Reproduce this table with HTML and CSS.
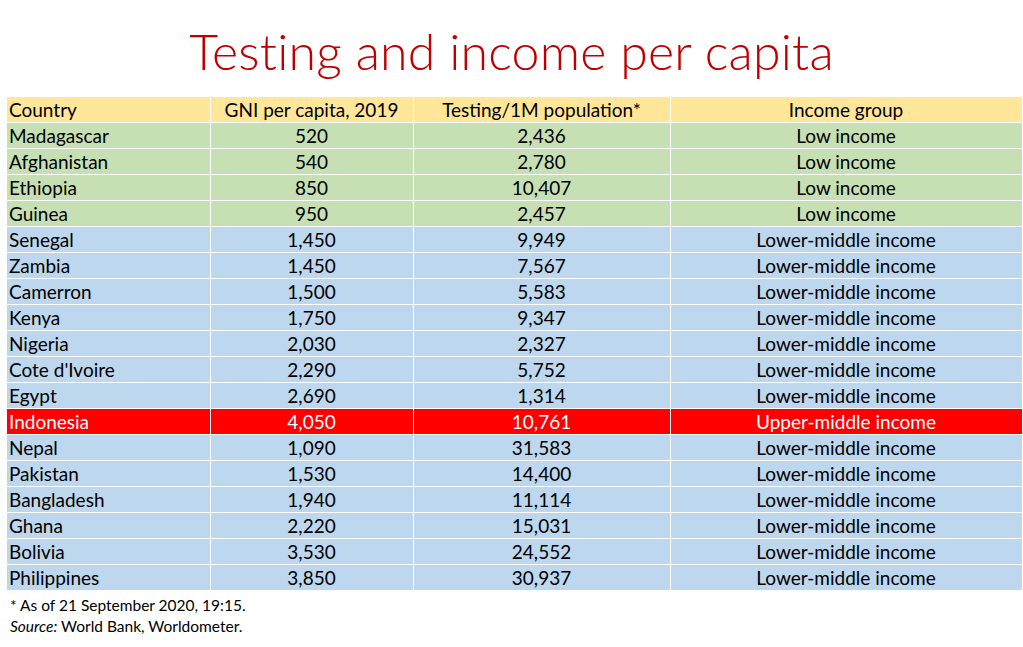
FILE: index.html
```html
<!DOCTYPE html>
<html>
<head>
<meta charset="utf-8">
<link rel="stylesheet" href="styles.css">
</head>
<body>
<h1 class="title">Testing and income per capita</h1>
<table class="data">
  <colgroup>
    <col class="c1"><col class="c2"><col class="c3"><col class="c4">
  </colgroup>
  <thead>
    <tr class="head"><th class="left">Country</th><th>GNI per capita, 2019</th><th>Testing/1M population*</th><th>Income group</th></tr>
  </thead>
  <tbody>
    <tr class="low"><td class="left">Madagascar</td><td>520</td><td>2,436</td><td>Low income</td></tr>
    <tr class="low"><td class="left">Afghanistan</td><td>540</td><td>2,780</td><td>Low income</td></tr>
    <tr class="low"><td class="left">Ethiopia</td><td>850</td><td>10,407</td><td>Low income</td></tr>
    <tr class="low"><td class="left">Guinea</td><td>950</td><td>2,457</td><td>Low income</td></tr>
    <tr class="lm"><td class="left">Senegal</td><td>1,450</td><td>9,949</td><td>Lower-middle income</td></tr>
    <tr class="lm"><td class="left">Zambia</td><td>1,450</td><td>7,567</td><td>Lower-middle income</td></tr>
    <tr class="lm"><td class="left">Camerron</td><td>1,500</td><td>5,583</td><td>Lower-middle income</td></tr>
    <tr class="lm"><td class="left">Kenya</td><td>1,750</td><td>9,347</td><td>Lower-middle income</td></tr>
    <tr class="lm"><td class="left">Nigeria</td><td>2,030</td><td>2,327</td><td>Lower-middle income</td></tr>
    <tr class="lm"><td class="left">Cote d'Ivoire</td><td>2,290</td><td>5,752</td><td>Lower-middle income</td></tr>
    <tr class="lm"><td class="left">Egypt</td><td>2,690</td><td>1,314</td><td>Lower-middle income</td></tr>
    <tr class="hi"><td class="left">Indonesia</td><td>4,050</td><td>10,761</td><td>Upper-middle income</td></tr>
    <tr class="lm"><td class="left">Nepal</td><td>1,090</td><td>31,583</td><td>Lower-middle income</td></tr>
    <tr class="lm"><td class="left">Pakistan</td><td>1,530</td><td>14,400</td><td>Lower-middle income</td></tr>
    <tr class="lm"><td class="left">Bangladesh</td><td>1,940</td><td>11,114</td><td>Lower-middle income</td></tr>
    <tr class="lm"><td class="left">Ghana</td><td>2,220</td><td>15,031</td><td>Lower-middle income</td></tr>
    <tr class="lm"><td class="left">Bolivia</td><td>3,530</td><td>24,552</td><td>Lower-middle income</td></tr>
    <tr class="lm"><td class="left">Philippines</td><td>3,850</td><td>30,937</td><td>Lower-middle income</td></tr>
  </tbody>
</table>
<div class="notes">
  <p>* As of 21 September 2020, 19:15.</p>
  <p><em>Source:</em> World Bank, Worldometer.</p>
</div>
</body>
</html>
```

FILE: styles.css
```css
html, body {
  margin: 0;
  padding: 0;
  background: #ffffff;
}
body {
  width: 1023px;
  height: 647px;
  overflow: hidden;
  font-family: Lato, "Liberation Sans", sans-serif;
  color: #000;
}
.title {
  margin: 0;
  padding-top: 23px;
  height: 76px;
  box-sizing: border-box;
  text-align: center;
  font-family: Lato, sans-serif;
  font-weight: 300;
  font-size: 50px;
  line-height: 56px;
  color: #c00000;
  letter-spacing: 0.2px;
}
.data {
  margin-left: 6px;
  margin-top: 20px;
  width: 1016px;
  border-collapse: collapse;
  table-layout: fixed;
  font-size: 19px;
}
.c1 { width: 204px; }
.c2 { width: 203px; }
.c3 { width: 257px; }
.c4 { width: 352px; }
.data th, .data td {
  height: 26px;
  box-sizing: border-box;
  padding: 1px 3px 0 2px;
  border: 1.5px solid #ffffff;
  text-align: center;
  font-weight: 400;
  line-height: 22px;
  white-space: nowrap;
}
.data .left { text-align: left; }
.head th { background: #ffe699; }
.low td { background: #c6e0b4; }
.lm td { background: #bdd7ee; }
.hi td { background: #ff0000; color: #ffffff; }
.notes {
  margin-top: 4px;
  padding-left: 10px;
  font-size: 15.5px;
  line-height: 21px;
}
.notes p { margin: 0; }
```
